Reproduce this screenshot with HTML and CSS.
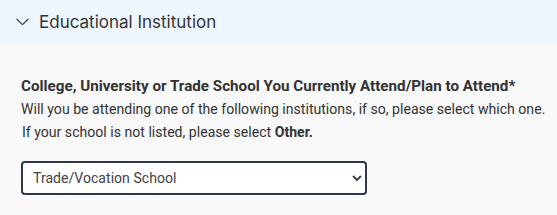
FILE: index.html
```html
<!DOCTYPE html>
<html lang="en">
<head>
    <meta charset="UTF-8">
    <title>Educational Institution</title>
    <link rel="stylesheet" href="styles.css">
</head>
<body>
    <div class="section">
        <div class="section-header">
            <svg class="chevron" width="13" height="8" viewBox="0 0 13 8">
                <path d="M1 1.2 L6.5 6.6 L12 1.2" fill="none" stroke="#444" stroke-width="1.3" stroke-linecap="round" stroke-linejoin="round"/>
            </svg>
            <span class="section-title">Educational Institution</span>
        </div>
        <div class="section-body">
            <label class="field-label" for="school">College, University or Trade School You Currently Attend/Plan to Attend*</label>
            <p class="field-help">Will you be attending one of the following institutions, if so, please select which one.</p>
            <p class="field-help indent">If your school is not listed, please select <strong>Other.</strong></p>
            <select class="field-select" id="school">
                <option>Trade/Vocation School</option>
                <option>Other</option>
            </select>
        </div>
    </div>
</body>
</html>
```

FILE: styles.css
```css
* {
    margin: 0;
    padding: 0;
    box-sizing: border-box;
}

body {
    background-color: #f9f9f9;
    font-family: Roboto, "Liberation Sans", sans-serif;
    color: #333;
}

.section-header {
    display: flex;
    align-items: center;
    height: 44px;
    padding-left: 16px;
    background-color: #eef6ff;
}

.chevron {
    margin-right: 10px;
}

.section-title {
    font-family: Inter, "Open Sans", sans-serif;
    font-size: 17px;
    color: #333;
}

.section-body {
    padding: 30px 8px 20px 21px;
}

.field-label {
    display: block;
    font-size: 15.2px;
    font-weight: 700;
    line-height: 24px;
    color: #333;
}

.field-help {
    font-size: 14.1px;
    line-height: 23px;
    color: #333;
}

.field-help.indent {
    padding-left: 1px;
}

.field-help strong {
    font-weight: 700;
}

.field-select {
    display: block;
    width: 346px;
    height: 34px;
    margin-top: 17px;
    padding: 0 6px 0 6px;
    font-family: Roboto, sans-serif;
    font-size: 14.1px;
    color: #444;
    background-color: #fff;
    border: 2px solid #2d3748;
    border-radius: 4px;
}
```
